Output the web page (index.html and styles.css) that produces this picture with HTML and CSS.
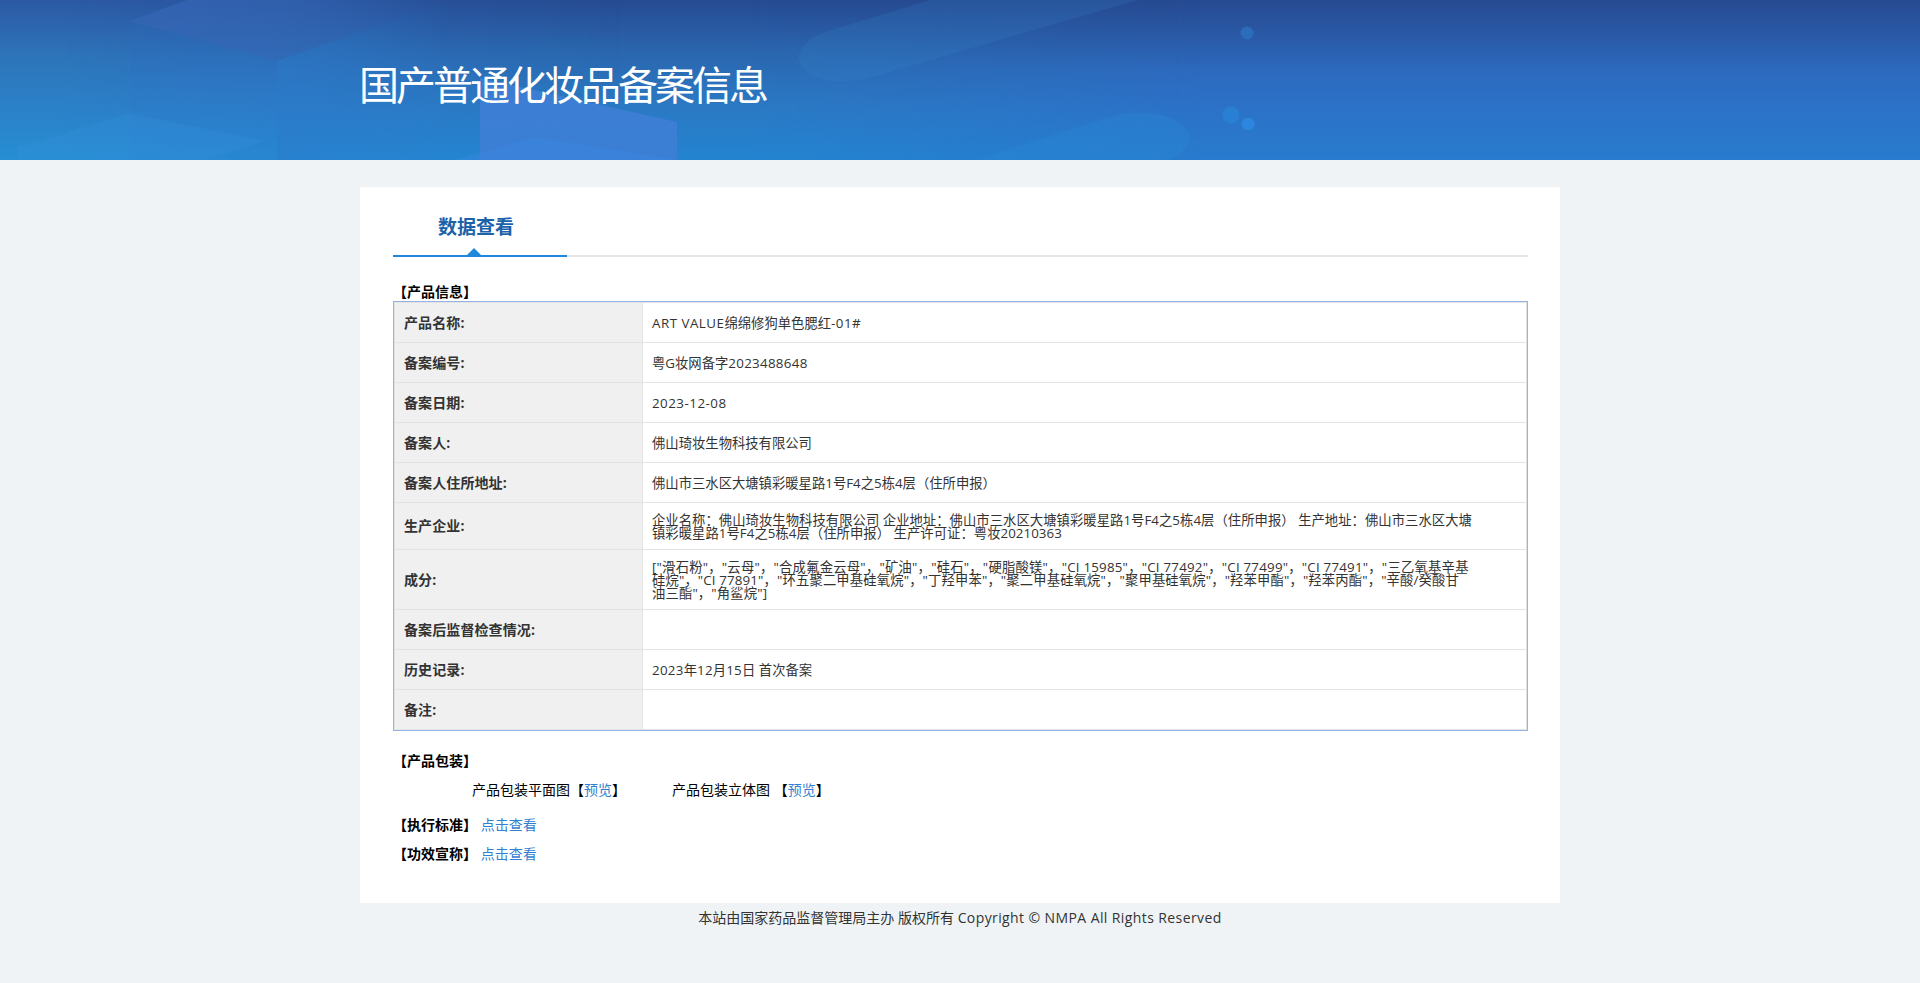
FILE: index.html
```html
<!DOCTYPE html>
<html lang="zh-CN">
<head>
  <meta charset="UTF-8">
  <title>国产普通化妆品备案信息</title>
  <link rel="stylesheet" href="styles.css">
</head>
<body>
  <div class="banner">
    <svg class="banner-bg" viewBox="0 0 1920 160" preserveAspectRatio="none">
      <defs>
        <linearGradient id="base" x1="0" y1="0" x2="0" y2="1">
          <stop offset="0" stop-color="#264a92"/>
          <stop offset="0.2" stop-color="#2a58a4"/>
          <stop offset="0.45" stop-color="#2d6abf"/>
          <stop offset="0.7" stop-color="#2b73c9"/>
          <stop offset="1" stop-color="#287bce"/>
        </linearGradient>
        <linearGradient id="left" x1="0" y1="0" x2="0" y2="1">
          <stop offset="0" stop-color="#2c59a4"/>
          <stop offset="0.35" stop-color="#2d74b9"/>
          <stop offset="0.7" stop-color="#2b82c9"/>
          <stop offset="1" stop-color="#268ed3"/>
        </linearGradient>
        <linearGradient id="mid" x1="0" y1="0" x2="0" y2="1">
          <stop offset="0" stop-color="#264b92"/>
          <stop offset="0.35" stop-color="#2a68b0"/>
          <stop offset="0.65" stop-color="#2b78c3"/>
          <stop offset="1" stop-color="#2384d0"/>
        </linearGradient>
        <linearGradient id="fadeLeft">
          <stop offset="0.1" stop-color="#fff"/>
          <stop offset="1" stop-color="#000"/>
        </linearGradient>
        <linearGradient id="fadeMid">
          <stop offset="0" stop-color="#000"/>
          <stop offset="0.35" stop-color="#fff"/>
          <stop offset="0.55" stop-color="#fff"/>
          <stop offset="1" stop-color="#000"/>
        </linearGradient>
        <linearGradient id="face" x1="0" y1="0" x2="1" y2="0">
          <stop offset="0" stop-color="#3566b6" stop-opacity="0.75"/>
          <stop offset="0.5" stop-color="#3567b6" stop-opacity="0.55"/>
          <stop offset="1" stop-color="#3566b6" stop-opacity="0"/>
        </linearGradient>
        <linearGradient id="side" x1="0" y1="0" x2="0" y2="1">
          <stop offset="0" stop-color="#2b64b0" stop-opacity="0.6"/>
          <stop offset="0.5" stop-color="#2d78c6" stop-opacity="0.6"/>
          <stop offset="1" stop-color="#2a86d2" stop-opacity="0.4"/>
        </linearGradient>
        <linearGradient id="side2" x1="0" y1="0" x2="1" y2="0">
          <stop offset="0" stop-color="#2b7acb" stop-opacity="0.45"/>
          <stop offset="1" stop-color="#2b7acb" stop-opacity="0"/>
        </linearGradient>
        <mask id="maskLeft"><rect width="620" height="160" fill="url(#fadeLeft)"/></mask>
        <mask id="maskMid"><rect x="200" width="1000" height="160" fill="url(#fadeMid)"/></mask>
      </defs>
      <rect width="1920" height="160" fill="url(#base)"/>
      <rect x="200" width="1000" height="160" fill="url(#mid)" mask="url(#maskMid)"/>
      <rect width="620" height="160" fill="url(#left)" mask="url(#maskLeft)"/>
      <!-- cubes -->
      <path d="M130 21L187 0H450L277 61Z" fill="url(#face)"/>
      <path d="M130 21L277 61V160H130Z" fill="url(#side)"/>
      <path d="M277 61L450 0V160H277Z" fill="url(#side2)"/>
      <path d="M18 147L130 113L265 141L205 160H18Z" fill="#3a94e0" fill-opacity="0.2"/>
      <path d="M480 78L677 122V160H480Z" fill="#3f7fd6" fill-opacity="0.85"/>
      <path d="M455 160L535 137L677 160Z" fill="#3b86e0" fill-opacity="0.4"/>
      <!-- capsules -->
      <path d="M930 0L825 32C788 46 792 72 825 80C840 83 858 81 872 77L1138 0Z" fill="#3a8cce" fill-opacity="0.18"/>
      <path d="M975 160L1110 117C1145 107 1184 116 1189 135C1191 145 1182 154 1168 160Z" fill="#2a8ad8" fill-opacity="0.3"/>
      <!-- dots -->
      <circle cx="1247" cy="33" r="6.5" fill="#2c74c2" fill-opacity="0.75"/>
      <circle cx="1231" cy="115" r="8.5" fill="#2a84d8" fill-opacity="0.7"/>
      <circle cx="1248" cy="124" r="6.5" fill="#2d8ae2" fill-opacity="0.8"/>
    </svg>
    <h1 class="banner-title">国产普通化妆品备案信息</h1>
  </div>

  <div class="main">
    <div class="tab-bar">
      <div class="tab active">数据查看</div>
    </div>

    <h3 class="section-title">【产品信息】</h3>
    <table class="info-table">
      <tr><th>产品名称:</th><td><span class="en">ART VALUE</span>绵绵修狗单色腮红<span class="en">-01#</span></td></tr>
      <tr><th>备案编号:</th><td>粤G妆网备字<span class="num">2023488648</span></td></tr>
      <tr><th>备案日期:</th><td><span class="en">2023-12-08</span></td></tr>
      <tr><th>备案人:</th><td>佛山琦妆生物科技有限公司</td></tr>
      <tr><th>备案人住所地址:</th><td>佛山市三水区大塘镇彩暖星路1号F4之5栋4层（住所申报）</td></tr>
      <tr class="two-lines"><th>生产企业:</th><td class="company">企业名称：佛山琦妆生物科技有限公司 企业地址：佛山市三水区大塘镇彩暖星路1号F4之5栋4层（住所申报） 生产地址：佛山市三水区大塘<br>镇彩暖星路1号F4之5栋4层（住所申报） 生产许可证：粤妆20210363</td></tr>
      <tr class="three-lines"><th>成分:</th><td><span class="line1">["滑石粉"，"云母"，"合成氟金云母"，"矿油"，"硅石"，"硬脂酸镁"，"CI 15985"，"CI 77492"，"CI 77499"，"CI 77491"，"三乙氧基辛基</span><br><span class="line2">硅烷"，"CI 77891"，"环五聚二甲基硅氧烷"，"丁羟甲苯"，"聚二甲基硅氧烷"，"聚甲基硅氧烷"，"羟苯甲酯"，"羟苯丙酯"，"辛酸/癸酸甘</span><br><span class="line2">油三酯"，"角鲨烷"]</span></td></tr>
      <tr><th>备案后监督检查情况:</th><td></td></tr>
      <tr><th>历史记录:</th><td><span class="num">2023</span>年<span class="num">12</span>月<span class="num">15</span>日 首次备案</td></tr>
      <tr><th>备注:</th><td></td></tr>
    </table>

    <h3 class="section-title package-title">【产品包装】</h3>
    <div class="package">
      <span>产品包装平面图【<a href="#">预览</a>】</span>
      <span>产品包装立体图 【<a href="#">预览</a>】</span>
    </div>
    <div class="more standard"><b>【执行标准】</b> <a href="#">点击查看</a></div>
    <div class="more"><b>【功效宣称】</b> <a href="#">点击查看</a></div>
  </div>

  <div class="footer">本站由国家药品监督管理局主办 版权所有 <span class="copyright">Copyright © NMPA All Rights Reserved</span></div>
</body>
</html>
```
FILE: styles.css
```css
* {
  margin: 0;
  padding: 0;
  box-sizing: border-box;
}

body {
  background: #eff3f6;
  font-family: "Open Sans", "Noto Sans CJK SC", sans-serif;
  font-size: 14px;
  color: #000;
}

a {
  color: #337fd0;
  text-decoration: none;
}

.banner {
  position: relative;
  height: 160px;
  overflow: hidden;
}

.banner-bg {
  position: absolute;
  top: 0;
  left: 0;
  width: 100%;
  height: 100%;
}

.banner-title {
  position: relative;
  width: 1202px;
  margin: 0 auto;
  padding-top: 55px;
  line-height: 60px;
  font-size: 40px;
  font-weight: normal;
  letter-spacing: -3px;
  color: #fff;
}

.main {
  width: 1200px;
  height: 716px;
  margin: 27px auto 0;
  padding: 20px 32px 0 33px;
  background: #fff;
}

.tab-bar {
  height: 50px;
  border-bottom: 2px solid #e6e6e6;
}

.tab {
  position: relative;
  width: 174px;
  height: 50px;
  padding-left: 45px;
  border-bottom: 2px solid #1f88dc;
  line-height: 41px;
  font-size: 19px;
  font-weight: bold;
  color: #1a62aa;
}

.tab.active::after {
  content: "";
  position: absolute;
  left: 74px;
  bottom: 0;
  border: 7px solid transparent;
  border-top-width: 0;
  border-bottom-color: #1f88dc;
}

.section-title {
  line-height: 20px;
  font-size: 14px;
}

.tab-bar + .section-title {
  margin-top: 25px;
  margin-bottom: -1px;
}

.info-table {
  width: 1135px;
  border: 1px solid #93b5e3;
  border-collapse: separate;
  border-spacing: 0;
  table-layout: fixed;
  color: #333;
}

.info-table th,
.info-table td {
  height: 40px;
  border-bottom: 1px solid #e3e3e3;
  text-align: left;
  vertical-align: middle;
}

.info-table tr:first-child th,
.info-table tr:first-child td {
  height: 41px;
  border-top: 1px solid #e3e3e3;
}

.info-table th {
  width: 249px;
  padding: 0 9px 2px;
  border-left: 1px solid #e3e3e3;
  border-right: 1px solid #e3e3e3;
  background: #f0f0f0;
  font-size: 14px;
  letter-spacing: 0.1px;
}

.info-table td {
  padding: 2px 9px 0;
  border-right: 1px solid #e3e3e3;
  line-height: 13.33px;
  font-size: 13.33px;
  white-space: nowrap;
}

.info-table .two-lines th {
  height: 47px;
}

.info-table .three-lines th {
  height: 60px;
}

.en {
  letter-spacing: 0.5px;
}

.num {
  letter-spacing: 0.3px;
}

.company {
  letter-spacing: 0.04px;
}

.line1 {
  letter-spacing: 0.22px;
}

.line2 {
  letter-spacing: 0.14px;
}

.package-title {
  margin-top: 20px;
}

.package {
  display: flex;
  gap: 46px;
  margin: 9px 0 0 79px;
  line-height: 20px;
}

.more {
  margin-top: 9px;
  line-height: 20px;
}

.more.standard {
  margin-top: 15px;
}

.footer {
  padding-top: 5px;
  line-height: 20px;
  text-align: center;
  color: #333;
}

.copyright {
  letter-spacing: 0.4px;
}
```
